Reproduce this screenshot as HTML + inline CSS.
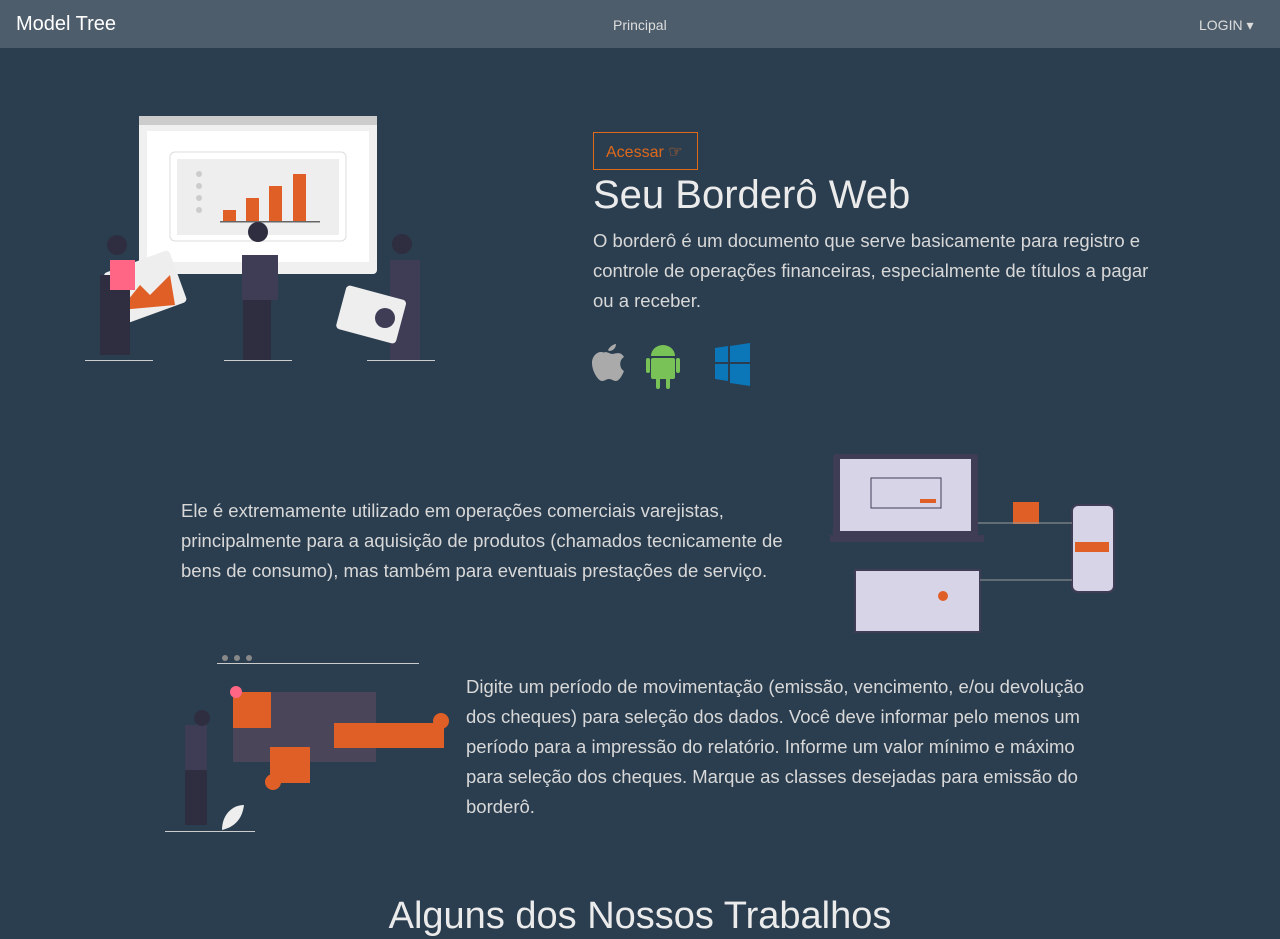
<!DOCTYPE html>
<html><head><meta charset="utf-8">
<style>
*{margin:0;padding:0;box-sizing:border-box}
body{width:1280px;height:939px;overflow:hidden;background:#2b3e50;font-family:"Liberation Sans",sans-serif;color:#ebebeb;position:relative}
.nav{position:absolute;left:0;top:0;width:1280px;height:48px;background:#4e5d6c}
.brand{position:absolute;left:16px;top:13px;font-size:20px;color:#fff}
.nl{position:absolute;top:17px;font-size:14px;color:#ddd}
.abs{position:absolute}
p.t{font-size:18.5px;line-height:30px;color:#d8d8d8}
.btn{position:absolute;left:593px;top:132px;width:105px;height:38px;border:1px solid #df691a;color:#df691a;font-size:16px;padding:9px 0 0 12px}
</style></head><body>
<div class="nav"><div class="brand">Model Tree</div><div class="nl" style="left:613px">Principal</div><div class="nl" style="left:1199px">LOGIN &#9662;</div></div>

<svg class="abs" style="left:80px;top:110px" width="370" height="260">
<rect x="59" y="6" width="238" height="158" rx="4" fill="#f0f0f0"/><rect x="59" y="6" width="238" height="9" fill="#ccc"/>
<rect x="67" y="21" width="222" height="131" fill="#fff"/>
<rect x="90" y="42" width="176" height="89" rx="5" fill="#fff" stroke="#ddd"/><rect x="97" y="49" width="162" height="76" fill="#eee"/>
<g fill="#ccc"><circle cx="119" cy="64" r="3"/><circle cx="119" cy="76" r="3"/><circle cx="119" cy="88" r="3"/><circle cx="119" cy="100" r="3"/></g>
<g fill="#df5f26"><rect x="143" y="100" width="13" height="12"/><rect x="166" y="88" width="13" height="24"/><rect x="189" y="76" width="13" height="36"/><rect x="213" y="64" width="13" height="48"/></g>
<rect x="140" y="111" width="100" height="1.5" fill="#666"/>
<rect x="162" y="145" width="36" height="45" fill="#3f3d56"/><rect x="163" y="190" width="28" height="60" fill="#2f2e41"/><circle cx="178" cy="122" r="10" fill="#2f2e41"/>
<rect x="30" y="150" width="70" height="55" rx="4" fill="#eee" transform="rotate(-20 65 177)"/><path d="M40 200 L60 175 L70 185 L90 165 L95 195 Z" fill="#df5f26"/>
<rect x="20" y="165" width="30" height="80" fill="#2f2e41"/><rect x="30" y="150" width="25" height="30" fill="#ff6584"/><circle cx="37" cy="135" r="10" fill="#2f2e41"/>
<rect x="310" y="150" width="30" height="100" fill="#3f3d56"/><circle cx="322" cy="134" r="10" fill="#2f2e41"/>
<rect x="260" y="182" width="62" height="45" rx="4" fill="#eee" transform="rotate(15 291 205)"/><circle cx="305" cy="208" r="10" fill="#3f3d56"/>
<g fill="#ccc"><rect x="5" y="250" width="68" height="1"/><rect x="144" y="250" width="68" height="1"/><rect x="287" y="250" width="68" height="1"/></g>
</svg>

<div class="btn">Acessar &#9758;</div>
<div class="abs" style="left:593px;top:173px;font-size:40px;color:#ebebeb">Seu Borderô Web</div>
<p class="t abs" style="left:593px;top:226px;width:580px">O borderô é um documento que serve basicamente para registro e controle de operações financeiras, especialmente de títulos a pagar ou a receber.</p>

<svg class="abs" style="left:585px;top:340px" width="180" height="50">
<path d="M23 10c2-4 6-6 8-6 0 4-3 7-7 7zM20 12c3 0 5 2 8 2 4-1 8-2 11 3-5 3-5 11 0 14-2 5-5 10-8 10s-4-2-7-2-4 2-7 2c-4 0-10-10-10-18 0-7 5-11 9-11 2 0 4 1 4 0z" fill="#aaa"/>
<g fill="#78c257"><path d="M66 16a12 11 0 0 1 24 0z"/><rect x="66" y="18" width="24" height="21" rx="2"/><rect x="61" y="18" width="4" height="15" rx="2"/><rect x="91" y="18" width="4" height="15" rx="2"/><rect x="71" y="36" width="4" height="13" rx="2"/><rect x="81" y="36" width="4" height="13" rx="2"/></g>
<g fill="#0b76b8"><path d="M130 8l13-2v16h-13zM145 6l20-3v19h-20zM130 24h13v17l-13-2zM145 24h20v22l-20-3z"/></g>
</svg>

<p class="t abs" style="left:181px;top:496px;width:630px">Ele é extremamente utilizado em operações comerciais varejistas, principalmente para a aquisição de produtos (chamados tecnicamente de bens de consumo), mas também para eventuais prestações de serviço.</p>

<svg class="abs" style="left:828px;top:450px" width="290" height="185">
<rect x="5" y="4" width="145" height="84" rx="3" fill="#3f3d56"/><rect x="12" y="9" width="131" height="72" fill="#d8d4e8"/><rect x="2" y="85" width="154" height="7" fill="#3f3d56"/>
<rect x="43" y="28" width="70" height="30" fill="none" stroke="#3f3d56"/><rect x="92" y="49" width="16" height="4" fill="#df5f26"/>
<rect x="185" y="52" width="26" height="22" fill="#df5f26"/>
<rect x="244" y="55" width="42" height="87" rx="6" fill="#d8d4e8" stroke="#3f3d56" stroke-width="2"/><rect x="247" y="92" width="34" height="10" fill="#df5f26"/>
<rect x="27" y="120" width="125" height="62" fill="#d8d4e8" stroke="#3f3d56" stroke-width="2"/><circle cx="115" cy="146" r="5" fill="#df5f26"/>
<g stroke="#999"><line x1="150" y1="73" x2="244" y2="73"/><line x1="152" y1="130" x2="244" y2="130"/></g>
</svg>

<svg class="abs" style="left:160px;top:650px" width="295" height="185">
<rect x="57" y="13" width="202" height="1" fill="#ccc"/><g fill="#888"><circle cx="65" cy="8" r="3"/><circle cx="77" cy="8" r="3"/><circle cx="89" cy="8" r="3"/></g>
<rect x="73" y="42" width="143" height="70" fill="#4a4558"/>
<rect x="73" y="42" width="38" height="36" fill="#df5f26"/><circle cx="76" cy="42" r="6" fill="#ff6584"/>
<rect x="174" y="73" width="110" height="25" fill="#df5f26"/><circle cx="281" cy="71" r="8" fill="#df5f26"/>
<rect x="110" y="97" width="40" height="36" fill="#df5f26"/><circle cx="113" cy="132" r="8" fill="#df5f26"/>
<rect x="25" y="75" width="22" height="45" fill="#3f3d56"/><rect x="25" y="120" width="22" height="55" fill="#2f2e41"/><circle cx="42" cy="68" r="8" fill="#2f2e41"/>
<path d="M62 180c0-15 10-25 22-25-2 15-10 22-22 25z" fill="#eee"/>
<rect x="5" y="181" width="90" height="1" fill="#ccc"/>
</svg>

<p class="t abs" style="left:466px;top:672px;width:650px">Digite um período de movimentação (emissão, vencimento, e/ou devolução dos cheques) para seleção dos dados. Você deve informar pelo menos um período para a impressão do relatório. Informe um valor mínimo e máximo para seleção dos cheques. Marque as classes desejadas para emissão do borderô.</p>

<div class="abs" style="left:0;width:1280px;text-align:center;top:895px;font-size:38px;color:#ebebeb">Alguns dos Nossos Trabalhos</div>
</body></html>
